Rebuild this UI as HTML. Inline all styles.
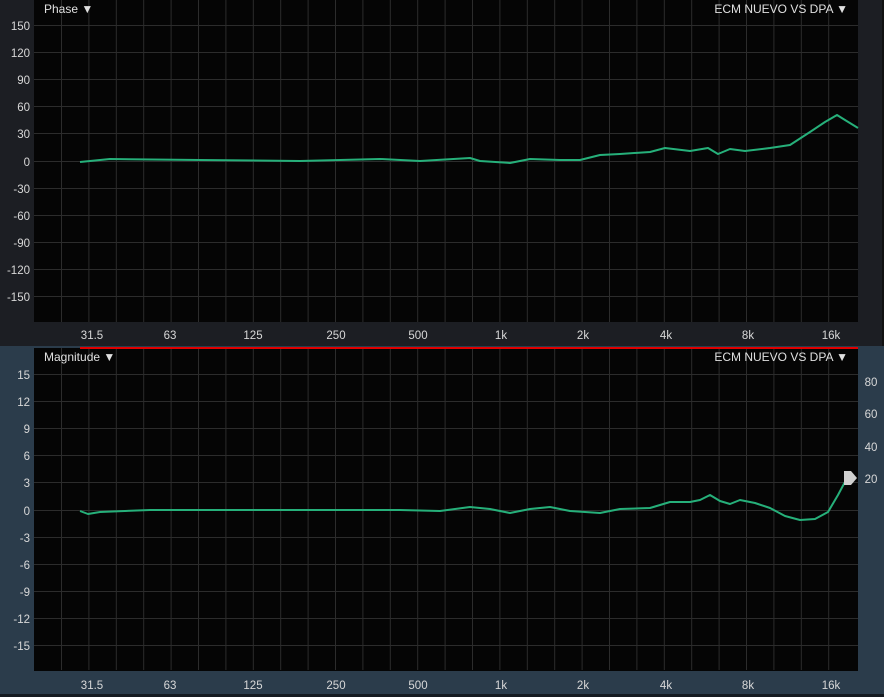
<!DOCTYPE html>
<html><head><meta charset="utf-8"><style>
body{margin:0;width:884px;height:697px;overflow:hidden;background:#1c1e23;font-family:"Liberation Sans",sans-serif}
svg{display:block}
</style></head><body>
<svg width="884" height="697" xmlns="http://www.w3.org/2000/svg" font-family="Liberation Sans, sans-serif">
<rect x="0" y="0" width="884" height="346" fill="#1c1e23"/>
<rect x="0" y="346" width="884" height="351" fill="#2b3c4b"/>
<rect x="0" y="694" width="884" height="3" fill="#151a20"/>
<rect x="882" y="0" width="2" height="346" fill="#111"/>
<rect x="34" y="0" width="824" height="322" fill="#050505"/>
<rect x="34" y="348" width="824" height="323" fill="#050505"/>
<g stroke="#2c2c2c" stroke-width="1">
<path id="v" d="M61.5 0V322M88.9 0V322M116.3 0V322M143.7 0V322M171.1 0V322M198.5 0V322M225.9 0V322M253.3 0V322M280.7 0V322M308.1 0V322M335.5 0V322M362.9 0V322M390.3 0V322M417.7 0V322M445.1 0V322M472.5 0V322M499.9 0V322M527.3 0V322M554.7 0V322M582.1 0V322M609.5 0V322M636.9 0V322M664.3 0V322M691.7 0V322M719.1 0V322M746.5 0V322M773.9 0V322M801.3 0V322M828.7 0V322"/>
<use href="#v" transform="translate(0,348)"/>
<path d="M34 25.5H858M34 52.5H858M34 79.5H858M34 106.5H858M34 133.5H858M34 161.5H858M34 188.5H858M34 215.5H858M34 242.5H858M34 269.5H858M34 296.5H858"/>
<path d="M34 374.5H858M34 401.5H858M34 428.5H858M34 455.5H858M34 482.5H858M34 510.5H858M34 537.5H858M34 564.5H858M34 591.5H858M34 618.5H858M34 645.5H858"/>
</g>
<g fill="#d8d8d8" font-size="11.5" text-anchor="end">
<text x="30" y="30">150</text><text x="30" y="57">120</text><text x="30" y="84">90</text><text x="30" y="111">60</text><text x="30" y="138">30</text><text x="30" y="166">0</text><text x="30" y="193">-30</text><text x="30" y="220">-60</text><text x="30" y="247">-90</text><text x="30" y="274">-120</text><text x="30" y="301">-150</text>
<text x="30" y="379">15</text><text x="30" y="406">12</text><text x="30" y="433">9</text><text x="30" y="460">6</text><text x="30" y="487">3</text><text x="30" y="515">0</text><text x="30" y="542">-3</text><text x="30" y="569">-6</text><text x="30" y="596">-9</text><text x="30" y="623">-12</text><text x="30" y="650">-15</text>
</g>
<g fill="#d8d8d8" font-size="11.5" text-anchor="middle">
<text x="92" y="339">31.5</text><text x="170" y="339">63</text><text x="253" y="339">125</text><text x="336" y="339">250</text><text x="418" y="339">500</text><text x="501" y="339">1k</text><text x="583" y="339">2k</text><text x="666" y="339">4k</text><text x="748" y="339">8k</text><text x="831" y="339">16k</text>
<text x="92" y="689">31.5</text><text x="170" y="689">63</text><text x="253" y="689">125</text><text x="336" y="689">250</text><text x="418" y="689">500</text><text x="501" y="689">1k</text><text x="583" y="689">2k</text><text x="666" y="689">4k</text><text x="748" y="689">8k</text><text x="831" y="689">16k</text>
<text x="871" y="386">80</text><text x="871" y="418">60</text><text x="871" y="451">40</text><text x="871" y="483">20</text>
</g>
<g fill="#e0e0e0" font-size="12">
<text x="44" y="13">Phase ▼</text>
<text x="44" y="361">Magnitude ▼</text>
<text x="848" y="13" text-anchor="end">ECM NUEVO VS DPA ▼</text>
<text x="848" y="361" text-anchor="end">ECM NUEVO VS DPA ▼</text>
</g>
<rect x="80" y="347" width="778" height="2" fill="#e00000"/>
<g fill="none" stroke="#26b07a" stroke-width="2" stroke-linejoin="round">
<path d="M80 162 L110 159 L200 160 L300 161 L380 159 L420 161 L470 158 L480 161 L510 163 L530 159 L560 160 L580 160 L600 155 L620 154 L650 152 L665 148 L690 151 L708 148 L718 154 L730 149 L745 151 L770 148 L790 145 L810 132 L825 122 L837 115 L845 120 L858 128"/>
<path d="M80 511 L88 514 L100 512 L150 510 L300 510 L400 510 L440 511 L470 507 L490 509 L510 513 L530 509 L550 507 L570 511 L600 513 L620 509 L650 508 L670 502 L690 502 L700 500 L710 495 L720 501 L730 504 L740 500 L755 503 L770 508 L785 516 L800 520 L815 519 L828 512 L838 495 L846 480"/>
</g>
<path d="M844 471 L851 471 L857 478 L851 485 L844 485 Z" fill="#d0d0d0"/>
</svg>
</body></html>
